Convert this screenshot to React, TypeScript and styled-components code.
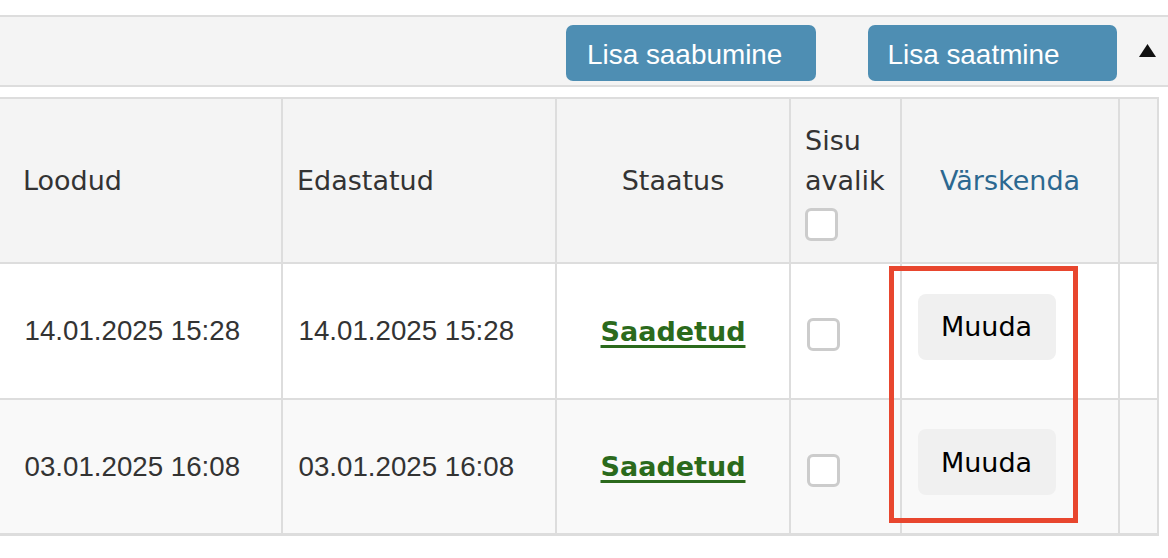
import React from 'react';
import styled, {createGlobalStyle} from 'styled-components';

const GlobalStyle = createGlobalStyle`
  html, body {
    margin: 0;
    padding: 0;
    background: #ffffff;
  }
  * {
    box-sizing: border-box;
  }
`;

const Page = styled.div`
  position: relative;
  width: 1168px;
  padding-top: 15px;
`;

const Toolbar = styled.div`
  display: flex;
  align-items: flex-start;
  justify-content: flex-end;
  height: 72px;
  padding: 8px 12px 0 0;
  background: #f4f4f4;
  border-top: 2px solid #dddddd;
  border-bottom: 2px solid #dddddd;
`;

const ActionButton = styled.button<{ $gap: number; $width: number; $indent: number }>`
  width: ${props => props.$width}px;
  height: 56px;
  margin-right: ${props => props.$gap}px;
  padding: 4px 0 0 ${props => props.$indent}px;
  border: none;
  border-radius: 7px;
  background: #4e8eb3;
  color: #ffffff;
  font-family: "Liberation Sans", Arial, sans-serif;
  font-size: 27.9px;
  text-align: left;
  cursor: pointer;
`;

const Collapse = styled.svg`
  margin-top: 19px;
  display: block;
`;

const Grid = styled.div`
  display: grid;
  width: 1159px;
  margin-top: 10px;
  grid-template-columns: 9px 274px 274px 234px 111px 218px 39px;
  grid-template-rows: 165px 136px 133px;
  border-top: 2px solid #dddddd;
  border-bottom: 3px solid #dddddd;
`;

const Cell = styled.div<{ $bg: string; $last?: boolean; $center?: boolean; $head?: boolean }>`
  display: flex;
  align-items: center;
  justify-content: ${props => (props.$center ? 'center' : 'flex-start')};
  padding: 0 ${props => (props.$head ? '14px' : '15.5px')};
  background: ${props => props.$bg};
  border-right: 2px solid #dddddd;
  border-bottom: ${props => (props.$last ? 'none' : '2px solid #dddddd')};
  color: #333333;
  font-family: ${props => (props.$head ? '"DejaVu Sans", Verdana, sans-serif' : '"Liberation Sans", Arial, sans-serif')};
  font-size: ${props => (props.$head ? '27px' : '27.7px')};
  white-space: nowrap;
`;

const HeadStack = styled.div`
  display: flex;
  flex-direction: column;
  align-items: flex-start;
  line-height: 40px;
`;

const RefreshLink = styled.a`
  color: #2c6890;
  text-decoration: none;
  cursor: pointer;
`;

const StatusLink = styled.a`
  color: #2b6a1c;
  font-family: "DejaVu Sans", Verdana, sans-serif;
  font-size: 27px;
  font-weight: bold;
  text-decoration: underline;
  text-decoration-thickness: 3px;
  text-underline-offset: 4px;
  cursor: pointer;
`;

const Box = styled.span<{ $shift: number }>`
  display: block;
  width: 33px;
  height: 33px;
  margin-top: ${props => props.$shift}px;
  border: 3px solid #cccccc;
  border-radius: 6px;
  background: #ffffff;
`;

const EditButton = styled.button`
  width: 138px;
  height: 66px;
  margin-bottom: 9px;
  padding: 0;
  border: none;
  border-radius: 8px;
  background: #f0f0f0;
  color: #000000;
  font-family: "DejaVu Sans", Verdana, sans-serif;
  font-size: 27px;
  cursor: pointer;
`;

const Highlight = styled.div`
  position: absolute;
  left: 889px;
  top: 266px;
  width: 189px;
  height: 257px;
  border: 5px solid #e8462e;
  pointer-events: none;
`;

const rows = [
    {created: '14.01.2025 15:28', sent: '14.01.2025 15:28', bg: '#ffffff'},
    {created: '03.01.2025 16:08', sent: '03.01.2025 16:08', bg: '#f9f9f9'},
];

export default function App() {
    const head = '#f4f4f4';

    return (
        <Page>
            <GlobalStyle/>
            <Toolbar>
                <ActionButton $gap={52} $width={250} $indent={21}>Lisa saabumine</ActionButton>
                <ActionButton $gap={22} $width={249} $indent={19.5}>Lisa saatmine</ActionButton>
                <Collapse width="17" height="13" viewBox="0 0 17 13">
                    <polygon points="8.5,0 17,13 0,13" fill="#111111"/>
                </Collapse>
            </Toolbar>
            <Grid>
                <Cell $bg={head} $head/>
                <Cell $bg={head} $head>Loodud</Cell>
                <Cell $bg={head} $head>Edastatud</Cell>
                <Cell $bg={head} $head $center>Staatus</Cell>
                <Cell $bg={head} $head>
                    <HeadStack>
                        <span>Sisu</span>
                        <span>avalik</span>
                        <Box $shift={7}/>
                    </HeadStack>
                </Cell>
                <Cell $bg={head} $head $center>
                    <RefreshLink>Värskenda</RefreshLink>
                </Cell>
                <Cell $bg={head} $head/>

                {rows.map((row, i) => {
                    const last = i === rows.length - 1;
                    return (
                        <React.Fragment key={i}>
                            <Cell $bg={row.bg} $last={last}/>
                            <Cell $bg={row.bg} $last={last}>{row.created}</Cell>
                            <Cell $bg={row.bg} $last={last}>{row.sent}</Cell>
                            <Cell $bg={row.bg} $last={last} $center>
                                <StatusLink>Saadetud</StatusLink>
                            </Cell>
                            <Cell $bg={row.bg} $last={last}>
                                <Box $shift={7}/>
                            </Cell>
                            <Cell $bg={row.bg} $last={last}>
                                <EditButton>Muuda</EditButton>
                            </Cell>
                            <Cell $bg={row.bg} $last={last}/>
                        </React.Fragment>
                    );
                })}
            </Grid>
            <Highlight/>
        </Page>
    );
}
